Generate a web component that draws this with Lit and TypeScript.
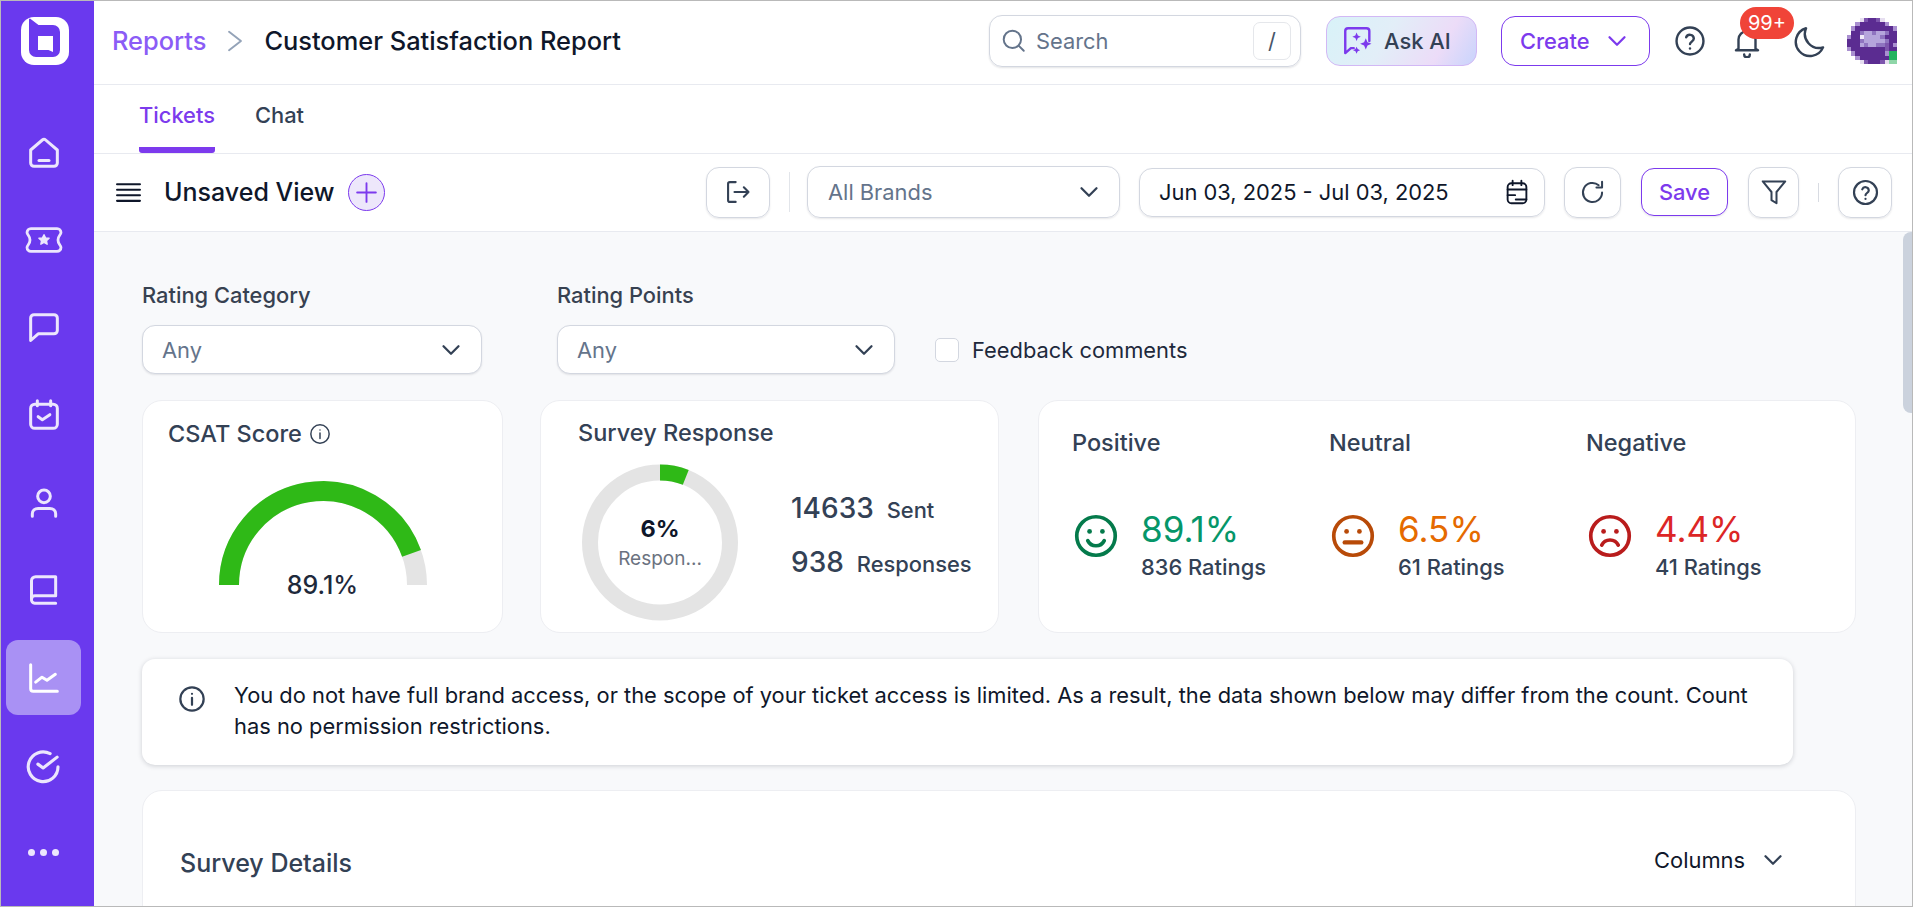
import { LitElement, html, css, svg } from "lit";
import { customElement } from "lit/decorators.js";

const I = (body: unknown, size = 24, sw = 2, cls = "") => html`<svg class=${cls} width=${size} height=${size} viewBox="0 0 24 24" fill="none" stroke="currentColor" stroke-width=${sw} stroke-linecap="round" stroke-linejoin="round">${body}</svg>`;

const chevron = svg`<path d="M6 9l6 6 6-6"/>`;
const help = svg`<circle cx="12" cy="12" r="9.5"/><path d="M9.3 9.4a2.8 2.8 0 0 1 5.4.9c0 1.8-2.7 2.4-2.7 3.9"/><path d="M12 17.2v.1"/>`;

const navIcons = [
  svg`<path d="M4 10.200 11 4.200a1.500 1.500 0 0 1 2 0L20 10.200V18a2 2 0 0 1-2 2H6a2 2 0 0 1-2-2Z"/><path d="M9 16.500h6"/>`,
  svg`<path d="M4.500 5.500h15a2.200 2.200 0 0 1 2.200 2.200c0 1.300-1.700 1.800-1.700 4.300s1.700 3 1.700 4.300a2.200 2.200 0 0 1-2.200 2.200h-15a2.200 2.200 0 0 1-2.200-2.200c0-1.300 1.700-1.800 1.700-4.300s-1.700-3-1.700-4.300A2.200 2.200 0 0 1 4.500 5.500Z"/><path d="M12 9l.9 1.800 2 .2-1.500 1.400.4 2-1.800-1-1.800 1 .4-2-1.500-1.400 2-.2Z" fill="currentColor" stroke-width=".8"/>`,
  svg`<path d="M4 19.500V6a2 2 0 0 1 2-2h12a2 2 0 0 1 2 2v7.500a2 2 0 0 1-2 2H8.500Z"/>`,
  svg`<rect x="4" y="5.500" width="16" height="14.500" rx="2.500"/><path d="M8 3.500v3M16 3.500v3"/><path d="M8.500 13l2.500 1.800 4.500-3"/>`,
  svg`<circle cx="12" cy="8" r="3.800"/><path d="M5 20v-1.500c0-2 1.500-3.200 3.500-3.200h7c2 0 3.500 1.200 3.500 3.200V20"/>`,
  svg`<path d="M4.500 17.500V6.500a2.500 2.500 0 0 1 2.500-2.500h12v11.500H6.500a2 2 0 0 0-2 2 2.200 2.200 0 0 0 2 2.500h12.500"/>`,
  svg`<path d="M4 4v14.500A1.500 1.500 0 0 0 5.500 20H20"/><path d="M7 14.500l3.800-3 3 1.800 5-3.500"/>`,
  svg`<path d="M20 13a8.500 8.500 0 1 1-4.500-7.500"/><path d="M8.500 11.500l3 2.200 8-6.200"/>`,
];

const avatarRows = [
  "...wMDDMw...",
  "..mDDDDDDm..",
  ".mDDDDDDDDDm",
  ".DDpLLpLLpDD",
  "mDDWLLLLpDDD",
  "DDDpLLLLLpDD",
  "DDDLpLLppMDm",
  "mDDDDDDDDMDD",
  ".mDDDDDDDmGG",
  "..mDDDDDDDGG",
  "...wMDDDMwgg",
];
const avatarColors: Record<string, string> = {
  w: "#e6def0", m: "#a98fd0", M: "#7d55ad", D: "#5b2c91", p: "#8f74c0", L: "#b5a5dc", W: "#efeaf8", G: "#22b35e", g: "#8fd6a8",
};

@customElement("app-root")
export class AppRoot extends LitElement {
  static styles = css`
    :host { display: block; font-family: Inter, "Noto Sans", sans-serif; color: #0f172a; }
    * { box-sizing: border-box; }
    .app { width: 1913px; height: 907px; border: 1px solid #b9b9b9; display: flex; overflow: hidden; background: #fff; }

    .side { width: 93px; flex: none; background: #6a39ee; display: flex; flex-direction: column; align-items: center; padding: 16px 8px 0 0; color: #ece6fd; }
    .logo { display: block; margin: 0 0 50px 3px; }
    .nav { width: 75px; height: 75px; border-radius: 12px; display: flex; align-items: center; justify-content: center; margin-bottom: 12.500px; flex: none; }
    .nav.on { background: #a991f4; color: #fff; }
    .dots { display: flex; gap: 5px; }
    .dots i { width: 7px; height: 7px; border-radius: 50%; background: #ece6fd; display: block; }

    .main { flex: 1; min-width: 0; display: flex; flex-direction: column; }

    .top { height: 84px; flex: none; border-bottom: 1px solid #e8eaf0; display: flex; align-items: center; padding: 0 0 4px 18px; }
    .crumb { font-size: 25.400px; font-weight: 500; color: #8b5cf6; }
    .sep { color: #94a3b8; margin: 0 16px; display: flex; }
    .title { font-size: 25.400px; font-weight: 500; color: #0f172a; }
    .search { margin-left: auto; width: 312px; height: 52px; border: 1px solid #d3d7e0; border-radius: 13px; display: flex; align-items: center; padding: 0 9px 0 11px; box-shadow: 0 1px 2px rgba(16,24,40,.12); color: #64748b; font-size: 21.875px; }
    .search span { margin-left: 9px; flex: 1; }
    .search b { width: 38px; height: 38px; border: 1px solid #e5e7eb; border-radius: 7px; font-weight: 400; display: flex; align-items: center; justify-content: center; color: #475569; }
    .ai { margin-left: 25px; width: 151px; height: 50px; border-radius: 14px; border: 1px solid #d2b8f5; background: linear-gradient(120deg, #d8f2f8 0%, #e2eef8 40%, #ecdcf8 75%, #c8d4fc 100%); display: flex; align-items: center; gap: 9px; padding-left: 14px; font-size: 21.875px; font-weight: 500; color: #334155; }
    .create { margin-left: 24px; width: 149px; height: 50px; border-radius: 14px; border: 1.500px solid #7c3aed; color: #7c3aed; display: flex; align-items: center; gap: 12px; padding-left: 18px; font-size: 21.875px; font-weight: 500; }
    .ti { color: #334155; display: flex; }
    .ti.help { margin-left: 23px; }
    .ti.bell { margin-left: 23px; position: relative; }
    .ti.moon { margin-left: 30px; }
    .badge { position: absolute; left: 10px; top: -17px; width: 54px; height: 32px; border-radius: 16px; background: #f04438; color: #fff; font-size: 20px; display: flex; align-items: center; justify-content: center; }
    .av { margin-left: 19px; margin-right: 15px; display: block; }

    .tabs { height: 69px; flex: none; border-bottom: 1px solid #e8eaf0; display: flex; align-items: flex-start; padding-left: 45px; gap: 40px; font-size: 21.875px; font-weight: 500; }
    .tab { height: 68px; padding-top: 15px; line-height: 30px; color: #334155; }
    .tab.on { color: #7c3aed; border-bottom: 6px solid #7c3aed; border-radius: 0 0 3px 3px; }

    .tool { height: 78px; flex: none; border-bottom: 1px solid #e8eaf0; display: flex; align-items: center; padding: 0 0 1px 22px; }
    .vname { margin-left: 23px; font-size: 25px; font-weight: 500; color: #0f172a; }
    .plus { margin-left: 13px; width: 37px; height: 37px; border-radius: 50%; border: 1px solid #7c3aed; background: #ede7fb; color: #7c3aed; display: flex; align-items: center; justify-content: center; }
    .btn { height: 51px; border: 1px solid #d3d7e0; border-radius: 13px; display: flex; align-items: center; justify-content: center; color: #334155; box-shadow: 0 1px 2px rgba(16,24,40,.1); flex: none; }
    .exp { margin-left: auto; width: 64px; }
    .vd { width: 1px; height: 40px; background: #e2e5ea; margin: 0 17px 0 19px; flex: none; }
    .brand { width: 313px; height: 52px; justify-content: space-between; padding: 0 15px 0 20px; color: #64748b; font-size: 21.875px; }
    .brand svg { color: #334155; }
    .date { margin-left: 19px; width: 406px; height: 49px; justify-content: space-between; padding: 0 12px 0 19px; color: #0f172a; font-size: 21.875px; }
    .ref { margin-left: 19px; width: 57px; }
    .save { margin-left: 20px; width: 87px; height: 48px; border-color: #7c3aed; color: #7c3aed; font-size: 21.875px; font-weight: 500; }
    .fil { margin-left: 20px; width: 51px; }
    .vd2 { width: 1px; height: 19px; background: #d8dbe2; margin: 0 19px; flex: none; }
    .hp { width: 54px; margin-right: 20px; }

    .content { flex: 1; min-height: 0; overflow: hidden; background: #f8f9fb; padding: 51px 0 0 48px; position: relative; }
    .thumb { position: absolute; top: 0; right: 0; width: 9px; height: 181px; background: #cbd2dd; border-radius: 8px 0 0 8px; }

    .filters { display: flex; align-items: flex-end; }
    .field { width: 340px; margin-right: 75px; }
    .field.b { width: 338px; margin-right: 40px; }
    .field label { display: block; height: 24px; line-height: 24px; margin-bottom: 18px; font-size: 21.875px; font-weight: 500; color: #374151; }
    .sel { height: 49px; background: #fff; border: 1px solid #d3d7e0; border-radius: 13px; display: flex; align-items: center; justify-content: space-between; padding: 0 15px 0 19px; font-size: 21.875px; color: #64748b; box-shadow: 0 1px 2px rgba(16,24,40,.1); }
    .sel svg { color: #334155; }
    .chk { height: 49px; display: flex; align-items: center; gap: 13px; font-size: 21.875px; color: #1e293b; font-weight: 400; }
    .chk i { width: 24px; height: 24px; border: 1px solid #d3d7e0; border-radius: 5px; background: #fff; display: block; }

    .cards { display: flex; margin-top: 26px; }
    .card { height: 233px; background: #fff; border: 1px solid #edeef2; border-radius: 20px; flex: none; }
    .csat { width: 361px; padding: 21px 0 0 25px; position: relative; }
    .ct { font-size: 23.500px; font-weight: 500; color: #334155; line-height: 24px; display: flex; align-items: center; gap: 7px; white-space: nowrap; }
    .gauge { display: block; margin: 34px 0 0 51px; }
    .gv { position: absolute; left: 0; right: 0; top: 170px; text-align: center; font-size: 25px; font-weight: 500; color: #1e293b; line-height: 28px; }

    .survey { width: 459px; margin-left: 37px; padding: 20px 0 0 37px; }
    .sb { display: flex; margin: 19px 0 0 4px; }
    .donut { position: relative; width: 156px; height: 157px; flex: none; }
    .donut svg { display: block; }
    .dc { position: absolute; inset: 0; text-align: center; padding-top: 53px; }
    .dc b { display: block; font-size: 23.500px; font-weight: 700; line-height: 24px; color: #0f172a; }
    .dc span { display: block; font-size: 19px; line-height: 22px; margin-top: 7px; color: #6b7280; }
    .stats { margin-left: 53px; padding-top: 27px; display: flex; flex-direction: column; gap: 22px; }
    .st { display: flex; align-items: baseline; gap: 13px; height: 32px; font-size: 21.875px; font-weight: 500; color: #334155; white-space: nowrap; }
    .st b { font-size: 28px; font-weight: 500; }

    .rate { width: 818px; margin-left: 39px; padding: 30px 0 0 33px; display: flex; }
    .rc { width: 257px; }
    .rc h4 { margin: 0; font-size: 23.500px; font-weight: 500; color: #334155; line-height: 24px; }
    .rr { display: flex; align-items: flex-start; gap: 23px; margin: 59px 0 0 2px; }
    .pct { font-size: 35px; line-height: 36px; font-weight: 400; margin-top: -3px; }
    .cnt { font-size: 21.875px; line-height: 24px; color: #334155; margin-top: 8px; font-weight: 500; }

    .notice { width: 1651px; height: 106px; margin-top: 26px; background: #fff; border-radius: 13px; box-shadow: 0 1px 5px rgba(16,24,40,.18); display: flex; padding: 21px 30px 0 36px; gap: 28px; color: #0f172a; font-size: 21.875px; line-height: 31px; }
    .notice svg { flex: none; margin-top: 5px; color: #334155; }
    .details { width: 1714px; height: 1900px; margin-top: 25px; background: #fff; border: 1px solid #edeef2; border-radius: 20px; display: flex; align-items: flex-start; justify-content: space-between; padding: 55px 67px 0 37px; }
    .details h3 { margin: 3px 0 0; font-size: 25px; font-weight: 500; color: #334155; line-height: 28px; }
    .col { display: flex; align-items: center; gap: 13px; font-size: 21.875px; height: 28px; color: #0f172a; }
    .col svg { color: #334155; }
  `;

  private face(color: string, mouth: unknown) {
    return html`<svg width="44" height="44" viewBox="0 0 24 24" fill="none" stroke=${color} stroke-width="2" stroke-linecap="round"><circle cx="12" cy="12" r="10.500"/><circle cx="8.500" cy="9.500" r="1.300" fill=${color} stroke="none"/><circle cx="15.500" cy="9.500" r="1.300" fill=${color} stroke="none"/>${mouth}</svg>`;
  }

  private rating(name: string, color: string, pctColor: string, mouth: unknown, pct: string, cnt: string) {
    return html`<div class="rc"><h4>${name}</h4><div class="rr">${this.face(color, mouth)}<div><div class="pct" style="color:${pctColor}">${pct}</div><div class="cnt">${cnt}</div></div></div></div>`;
  }

  private avatar() {
    return html`<svg class="av" width="50" height="46" viewBox="0 0 12 11" shape-rendering="crispEdges">${avatarRows.flatMap((r, y) => [...r].map((c, x) => c === "." ? null : svg`<rect x=${x} y=${y} width="1" height="1" fill=${avatarColors[c]}/>`))}</svg>`;
  }

  render() {
    const R = 94, cx = 104, cy = 105;
    const a = Math.PI * (1 - 0.891);
    const ex = cx + R * Math.cos(a), ey = cy - R * Math.sin(a);
    const dr = 70, da = 2 * Math.PI * 0.06;
    const dx = 78 + dr * Math.sin(da), dy = 78.5 - dr * Math.cos(da);
    return html`<div class="app">
      <aside class="side">
        <svg class="logo" width="48" height="48" viewBox="0 0 48 48">
          <rect width="48" height="48" rx="13" fill="#fff"/>
          <path d="M9 1.500 L17.500 8 H32 a7 7 0 0 1 7 7 V33 a7 7 0 0 1-7 7 H15 a7 7 0 0 1-7-7 V2 Z" fill="#6a39ee"/>
          <path d="M17 19 H32 V35 L27.500 33 H17 Z" fill="#fff"/>
        </svg>
        ${navIcons.map((n, i) => html`<div class="nav ${i === 6 ? "on" : ""}">${I(n, i === 1 ? 42 : i === 7 ? 42 : 40, i === 1 ? 1.600 : 1.800)}</div>`)}
        <div class="nav"><div class="dots"><i></i><i></i><i></i></div></div>
      </aside>
      <div class="main">
        <header class="top">
          <span class="crumb">Reports</span>
          <span class="sep">${I(svg`<path d="M6.500 3.500 17.500 12 6.500 20.500"/>`, 26, 1.800)}</span>
          <span class="title">Customer Satisfaction Report</span>
          <div class="search">${I(svg`<circle cx="10.500" cy="10.500" r="8"/><path d="M16.500 16.500 21 21"/>`, 26, 1.800)}<span>Search</span><b>/</b></div>
          <div class="ai">
            <svg width="34" height="34" viewBox="0 0 24 24" fill="none" stroke="#7c3aed" stroke-width="1.700" stroke-linecap="round" stroke-linejoin="round"><path d="M10 3H5a2 2 0 0 0-2 2v15.500l4-3.500h2M20 12V5a2 2 0 0 0-2-2H10"/><path d="M11 6l.9 2.100 2.100.9-2.100.9L11 12l-.9-2.100L8 9l2.100-.9Z M17.500 10l1.200 2.800 2.800 1.200-2.800 1.200-1.200 2.800-1.200-2.800-2.800-1.200 2.800-1.200Z M11 16l.8 1.700 1.700.8-1.700.8-.8 1.700-.8-1.700-1.700-.8 1.700-.8Z" fill="#7c3aed" stroke="none"/></svg>
            Ask AI
          </div>
          <div class="create">Create ${I(chevron, 30, 1.800)}</div>
          <span class="ti help">${I(help, 34, 1.700)}</span>
          <span class="ti bell">${I(svg`<path d="M6 17.500V11a6 6 0 0 1 12 0v6.500l1.800 1H4.200Z"/><path d="M10 21.500a2 2 0 0 0 4 0"/>`, 34, 1.700)}<span class="badge">99+</span></span>
          <span class="ti moon">${I(svg`<path d="M20.500 16.500A10 10 0 0 1 8.500 3a10 10 0 1 0 12 13.500Z"/>`, 34, 1.700)}</span>
          ${this.avatar()}
        </header>
        <nav class="tabs"><div class="tab on">Tickets</div><div class="tab">Chat</div></nav>
        <section class="tool">
          ${I(svg`<path d="M1 4h22M1 9.300h22M1 14.700h22M1 20h22"/>`, 25, 2)}
          <span class="vname">Unsaved View</span>
          <span class="plus">${I(svg`<path d="M12 3v18M3 12h18"/>`, 25, 1.800)}</span>
          <div class="btn exp">${I(svg`<path d="M10 3.500H5A1.500 1.500 0 0 0 3.500 5v14A1.500 1.500 0 0 0 5 20.500h5"/><path d="M9 12h12M17 8l4 4-4 4"/>`, 28, 1.800)}</div>
          <span class="vd"></span>
          <div class="btn brand">All Brands ${I(chevron, 30, 1.800)}</div>
          <div class="btn date">Jun 03, 2025 - Jul 03, 2025 ${I(svg`<rect x="4.500" y="5" width="15" height="16" rx="3"/><path d="M8.500 3v3.500M15.500 3v3.500M4.500 10h15M4.500 14.500h6M11 18h8.500"/>`, 30, 1.500)}</div>
          <div class="btn ref">${I(svg`<path d="M20.500 12a8.500 8.500 0 1 1-3-6.500"/><path d="M20.500 2.500v5h-5"/>`, 27, 1.800)}</div>
          <div class="btn save">Save</div>
          <div class="btn fil">${I(svg`<path d="M3 3.500h18l-7 8.500v9l-4-2.500V12Z"/>`, 30, 1.600)}</div>
          <span class="vd2"></span>
          <div class="btn hp">${I(help, 29, 1.800)}</div>
        </section>
        <main class="content">
          <span class="thumb"></span>
          <div class="filters">
            <div class="field"><label>Rating Category</label><div class="sel">Any ${I(chevron, 30, 1.800)}</div></div>
            <div class="field b"><label>Rating Points</label><div class="sel">Any ${I(chevron, 30, 1.800)}</div></div>
            <div class="chk"><i></i>Feedback comments</div>
          </div>
          <div class="cards">
            <div class="card csat">
              <div class="ct">CSAT Score ${I(svg`<circle cx="12" cy="12" r="10"/><path d="M12 11v6M12 7.500v.1"/>`, 22, 1.600)}</div>
              <svg class="gauge" width="208" height="105" viewBox="0 0 208 105" fill="none" stroke-width="20">
                <path d="M${cx - R} ${cy} A${R} ${R} 0 0 1 ${cx + R} ${cy}" stroke="#e4e4e4"/>
                <path d="M${cx - R} ${cy} A${R} ${R} 0 0 1 ${ex} ${ey}" stroke="#2fb917"/>
              </svg>
              <div class="gv">89.1%</div>
            </div>
            <div class="card survey">
              <div class="ct">Survey Response</div>
              <div class="sb">
                <div class="donut">
                  <svg width="156" height="157" viewBox="0 0 156 157" fill="none" stroke-width="16">
                    <circle cx="78" cy="78.5" r=${dr} stroke="#e4e4e4"/>
                    <path d="M78 8.500 A${dr} ${dr} 0 0 1 ${dx} ${dy}" stroke="#2fb917"/>
                  </svg>
                  <div class="dc"><b>6%</b><span>Respon...</span></div>
                </div>
                <div class="stats">
                  <div class="st"><b>14633</b> Sent</div>
                  <div class="st"><b>938</b> Responses</div>
                </div>
              </div>
            </div>
            <div class="card rate">
              ${this.rating("Positive", "#047a4b", "#059669", svg`<path d="M7.500 14.500a5 5 0 0 0 9 0"/>`, "89.1%", "836 Ratings")}
              ${this.rating("Neutral", "#b84a08", "#e56a00", svg`<path d="M7.500 15.500h9" stroke-width="2.400"/>`, "6.5%", "61 Ratings")}
              ${this.rating("Negative", "#b91c1c", "#dc2626", svg`<path d="M7.500 17a5 5 0 0 1 9 0"/>`, "4.4%", "41 Ratings")}
            </div>
          </div>
          <div class="notice">
            ${I(svg`<circle cx="12" cy="12" r="10"/><path d="M12 11v6M12 7.500v.1"/>`, 28, 1.900)}
            <div>You do not have full brand access, or the scope of your ticket access is limited. As a result, the data shown below may differ from the count. Count has no permission restrictions.</div>
          </div>
          <div class="details">
            <h3>Survey Details</h3>
            <div class="col">Columns ${I(chevron, 30, 1.800)}</div>
          </div>
        </main>
      </div>
    </div>`;
  }
}
